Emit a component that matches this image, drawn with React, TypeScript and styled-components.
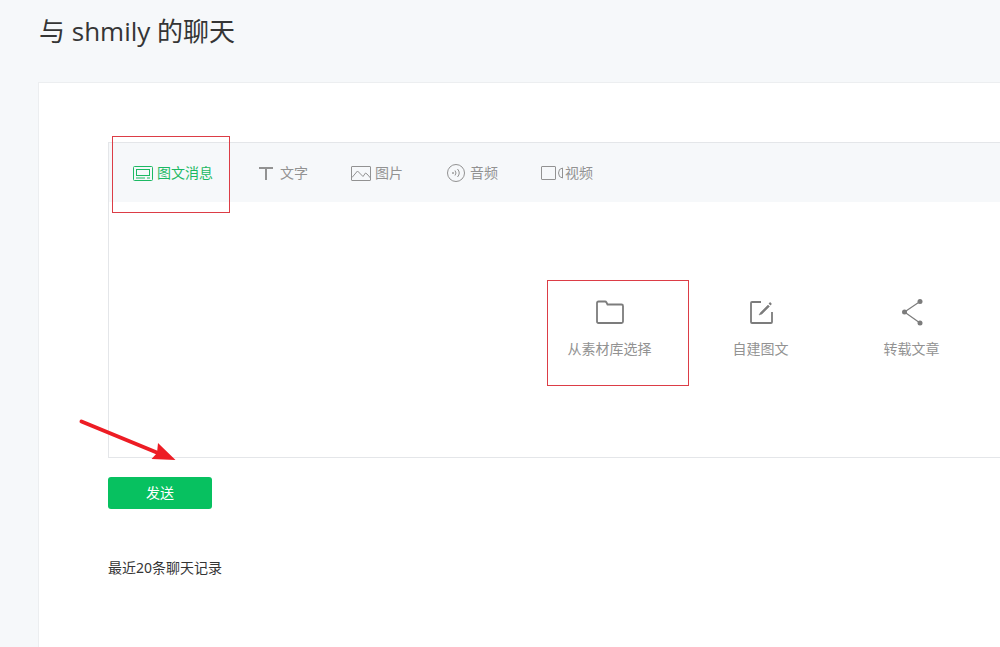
import React, { useState } from "react";
import styled, { createGlobalStyle } from "styled-components";

const GlobalStyle = createGlobalStyle`
  *, *::before, *::after { box-sizing: border-box; }
  body {
    margin: 0;
    background: #f6f8fa;
    color: #353535;
    font-family: "Noto Sans", "Noto Sans CJK SC", sans-serif;
    font-size: 14px;
    line-height: 20px;
  }
  button { font: inherit; color: inherit; background: none; border: 0; padding: 0; cursor: pointer; }
  h1, h2 { margin: 0; font-weight: 400; }
`;

const Page = styled.div`
  display: flex;
  flex-direction: column;
  min-height: 100vh;
  padding-left: 38px;
  overflow: hidden;
`;

const Title = styled.h1`
  padding: 11px 0 31px 1px;
  font-family: "Open Sans", "Noto Sans CJK SC", sans-serif;
  font-size: 26px;
  line-height: 40px;
  color: #353535;
`;

const Card = styled.main`
  flex: 1;
  padding: 59px 0 60px 69px;
  background: #fff;
  border: 1px solid #eceef0;
  border-width: 1px 0 0 1px;
`;

const Editor = styled.section`
  border: 1px solid #e4e6e9;
  border-right: 0;
`;

const TabBar = styled.div`
  display: flex;
  gap: 43px;
  height: 59px;
  padding-left: 24px;
  background: #f6f8fa;
`;

const Tab = styled.button<{ $active: boolean }>`
  position: relative;
  display: flex;
  align-items: center;
  gap: 4px;
  white-space: nowrap;
  color: ${(p) => (p.$active ? "#1cb963" : "#929292")};
`;

const TabIcon = styled.svg`
  width: 20px;
  height: 20px;
  overflow: visible;
  fill: none;
  stroke: currentColor;
`;

const Choices = styled.div`
  display: flex;
  justify-content: flex-end;
  align-items: center;
  height: 255px;
  padding: 0 13px 4px 0;
`;

const Choice = styled.button`
  position: relative;
  display: flex;
  flex-direction: column;
  align-items: center;
  gap: 12px;
  width: 151px;
  color: #929292;
`;

const ChoiceIcon = styled.svg`
  width: 30px;
  height: 30px;
  fill: none;
  stroke: #7c7c7c;
`;

const Highlight = styled.span<{ $inset: string }>`
  position: absolute;
  inset: ${(p) => p.$inset};
  border: 1px solid #dc3d46;
  pointer-events: none;
`;

const Actions = styled.div`
  position: relative;
  padding: 19px 0 49px;
`;

const SendButton = styled.button`
  display: block;
  width: 104px;
  height: 32px;
  border-radius: 3px;
  background: #07c160;
  color: #fff;
`;

const Arrow = styled.svg`
  position: absolute;
  left: -30px;
  top: -41px;
  width: 100px;
  height: 46px;
  pointer-events: none;
`;

const HistoryTitle = styled.h2`
  font-size: 14px;
  line-height: 20px;
`;

const tabs = [
  {
    label: "图文消息",
    icon: (
      <>
        <rect x="0.5" y="3.5" width="19" height="14" rx="1" />
        <rect x="3.5" y="6.5" width="13" height="6" />
        <path d="M3 15h9M14 15h3" />
      </>
    ),
  },
  { label: "文字", icon: <path d="M3 5h14M10 5v12" strokeWidth="2" /> },
  {
    label: "图片",
    icon: (
      <>
        <rect x="0.5" y="3.5" width="19" height="14" rx="0.5" />
        <path d="M1 14.5L6.5 8l5.500 5.500L14.500 10l1.500 1 3.500 4" />
      </>
    ),
  },
  {
    label: "音频",
    icon: (
      <>
        <circle cx="10" cy="10" r="8.5" />
        <circle cx="7" cy="10" r="0.5" fill="currentColor" />
        <path d="M9 7.5q2 2.5 0 5M11.5 6q3.5 4 0 8" />
      </>
    ),
  },
  {
    label: "视频",
    icon: (
      <>
        <rect x="0.5" y="3.5" width="14" height="13" rx="0.5" />
        <path d="M21.5 5v10q-4-0.5-4-5t4-5z" />
      </>
    ),
  },
];

const choices = [
  {
    label: "从素材库选择",
    icon: (
      <path
        d="M2 24.500V6q0-1.500 1.500-1.500H10q1 0 1.500 1l1 2H26.500q1.500 0 1.500 1.500v15.500q0 1.500-1.500 1.500H3.500q-1.500 0-1.500-1.500z"
        strokeWidth="1.8"
      />
    ),
  },
  {
    label: "自建图文",
    icon: (
      <>
        <path d="M15 5H6q-1 0-1 1v19q0 1 1 1h19q1 0 1-1V15" strokeWidth="1.8" />
        <path d="M13 18l1.500-2.500L22 8l1.500 1.500L16 17z" fill="#7c7c7c" strokeWidth="0.5" />
        <path d="M23.500 7.500l1.500-1.500" strokeWidth="2.5" />
      </>
    ),
  },
  {
    label: "转载文章",
    icon: (
      <>
        <path d="M23 4.5L7.5 15 23 26" strokeWidth="1.2" />
        <g fill="#7c7c7c" stroke="none">
          <circle cx="23" cy="4.5" r="2.5" />
          <circle cx="7.5" cy="15" r="2.5" />
          <circle cx="23" cy="26" r="2.5" />
        </g>
      </>
    ),
  },
];

export default function App() {
  const [active, setActive] = useState(0);
  return (
    <>
      <GlobalStyle />
      <Page>
        <Title>与 shmily 的聊天</Title>
        <Card>
          <Editor>
            <TabBar role="tablist">
              {tabs.map((tab, i) => (
                <Tab
                  key={tab.label}
                  type="button"
                  role="tab"
                  aria-selected={i === active}
                  $active={i === active}
                  onClick={() => setActive(i)}
                >
                  <TabIcon viewBox="0 0 20 20" aria-hidden="true">
                    {tab.icon}
                  </TabIcon>
                  {tab.label}
                  {i === 0 && <Highlight $inset="-7px -17px -11px -21px" />}
                </Tab>
              ))}
            </TabBar>
            <Choices>
              {choices.map((choice, i) => (
                <Choice key={choice.label} type="button">
                  <ChoiceIcon viewBox="0 0 30 30" aria-hidden="true">
                    {choice.icon}
                  </ChoiceIcon>
                  {choice.label}
                  {i === 0 && <Highlight $inset="-17px -4px -27px 13px" />}
                </Choice>
              ))}
            </Choices>
          </Editor>
          <Actions>
            <SendButton type="button">发送</SendButton>
            <Arrow viewBox="0 0 100 46" aria-hidden="true">
              <path d="M3.500 4.500L80 36" stroke="#ed1c24" strokeWidth="4" strokeLinecap="round" />
              <path d="M80 26L97.500 43 73.500 42 79 36z" fill="#ed1c24" />
            </Arrow>
          </Actions>
          <HistoryTitle>最近20条聊天记录</HistoryTitle>
        </Card>
      </Page>
    </>
  );
}
